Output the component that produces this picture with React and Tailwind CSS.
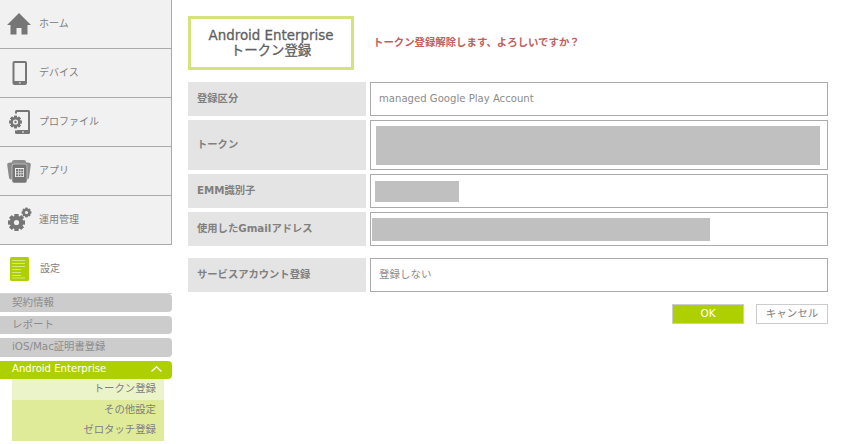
import React from 'react';

const font = "font-['DejaVu_Sans','Noto_Sans_CJK_JP',sans-serif]";

function HomeIcon() {
  return (
    <svg width="24" height="24" viewBox="0 0 24 24" fill="#767676">
      <path d="M12 1 L24 13 L20.5 13 L20.5 22.5 L14.5 22.5 L14.5 16 L9.5 16 L9.5 22.5 L3.5 22.5 L3.5 13 L0 13 Z" />
    </svg>
  );
}

function DeviceIcon() {
  return (
    <svg width="16" height="26" viewBox="0 0 16 26">
      <rect x="0.5" y="1" width="14.5" height="24" rx="2" fill="#767676" />
      <rect x="2.5" y="3" width="10.5" height="18" fill="#f1f1f1" />
      <rect x="6.8" y="22.4" width="2" height="1" fill="#f1f1f1" />
    </svg>
  );
}

function GearPath({ cx, cy, r, hole }) {
  const teeth = [0, 45, 90, 135, 180, 225, 270, 315];
  return (
    <g>
      {teeth.map((a) => (
        <rect key={a} x={cx - r * 0.28} y={cy - r * 1.25} width={r * 0.56} height={r * 2.5} fill="#767676" transform={`rotate(${a} ${cx} ${cy})`} />
      ))}
      <circle cx={cx} cy={cy} r={r} fill="#767676" />
      <circle cx={cx} cy={cy} r={hole} fill="#f1f1f1" />
    </g>
  );
}

function ProfileIcon() {
  return (
    <svg width="24" height="26" viewBox="0 0 24 26">
      <rect x="7" y="1" width="15" height="24" rx="1.5" fill="#767676" />
      <rect x="9" y="3" width="11" height="18" fill="#f1f1f1" />
      <rect x="14" y="22.5" width="2" height="1" fill="#f1f1f1" />
      <circle cx="8" cy="13" r="8.5" fill="#f1f1f1" />
      <GearPath cx={7.5} cy={13} r={5} hole={2.6} />
      <circle cx="7.5" cy="13" r="1.2" fill="#767676" />
    </svg>
  );
}

function AppIcon() {
  return (
    <svg width="24" height="24" viewBox="0 0 24 24">
      <rect x="1" y="3" width="13" height="17" rx="2" fill="#8a8a8a" transform="rotate(-8 7 11)" />
      <rect x="5" y="1" width="14" height="10" rx="2" fill="#8f8f8f" />
      <rect x="10" y="3" width="13" height="17" rx="2" fill="#8a8a8a" transform="rotate(8 17 11)" />
      <rect x="5" y="5" width="15" height="19" rx="2" fill="#767676" stroke="#f1f1f1" strokeWidth="0.5" />
      <rect x="8" y="9" width="9" height="9" fill="#f1f1f1" />
      <path d="M9 10h2v2H9zM11.6 10h2v2h-2zM14.2 10h2v2h-2zM9 12.6h2v2H9zM11.6 12.6h2v2h-2zM14.2 12.6h2v2h-2zM9 15.2h2v2H9zM11.6 15.2h2v2h-2zM14.2 15.2h2v2h-2z" fill="#767676" />
    </svg>
  );
}

function OpsIcon() {
  return (
    <svg width="24" height="26" viewBox="0 0 24 26">
      <GearPath cx={8.5} cy={15.5} r={6.8} hole={2.6} />
      <GearPath cx={18.5} cy={5.5} r={3.8} hole={1.6} />
    </svg>
  );
}

function SettingIcon() {
  return (
    <svg width="19" height="24" viewBox="0 0 19 24">
      <rect x="0" y="0" width="19" height="24" rx="1.5" fill="#afd000" />
      <path d="M2 3.5h13M2 6.5h13M2 9.5h13M2 12.5h9M2 15.5h9M2 18.5h9M2 21h13" stroke="#d7e67f" strokeWidth="1" />
    </svg>
  );
}

const mainMenu = [
  { label: 'ホーム', icon: <HomeIcon />, w: 'w-[24px]' },
  { label: 'デバイス', icon: <DeviceIcon />, w: 'w-[16px] ml-[5px]' },
  { label: 'プロファイル', icon: <ProfileIcon />, w: 'w-[24px] ml-[1px]' },
  { label: 'アプリ', icon: <AppIcon />, w: 'w-[24px]' },
  { label: '運用管理', icon: <OpsIcon />, w: 'w-[24px] ml-[1px]' },
];

function Row({ label, children, className = 'h-[34px]', boxClass = '' }) {
  return (
    <div className={`flex gap-[4px] ${className}`}>
      <div className="w-[178px] shrink-0 bg-[#e4e4e4] pl-[9px] flex items-center text-[10.3px] font-bold text-[#808080]">
        {label}
      </div>
      <div className={`flex-1 border border-[#aaaaaa] flex items-center bg-white ${boxClass}`}>{children}</div>
    </div>
  );
}

export default function App() {
  return (
    <div className={`w-[842px] h-[444px] bg-white flex overflow-hidden ${font}`}>
      {/* Sidebar */}
      <div className="w-[172px] shrink-0">
        <div className="border-r border-[#aaaaaa] bg-[#f1f1f1]">
          {mainMenu.map((m) => (
            <div key={m.label} className="h-[49px] border-b border-[#aaaaaa] flex items-center pl-[7px]">
              <div className="w-[24px] flex items-center">
                <div className={`${m.w} shrink-0`}>{m.icon}</div>
              </div>
              <span className="ml-[8px] mb-[2px] text-[10px] text-[#808080]">{m.label}</span>
            </div>
          ))}
        </div>
        <div className="h-[49px] border-b border-[#d4d4d4] flex items-center pl-[10px]">
          <SettingIcon />
          <span className="ml-[11px] mb-[2px] text-[10px] text-[#808080]">設定</span>
        </div>
        <div className="flex flex-col gap-[4px]">
          <div className="h-[18px] bg-[#cccccc] rounded-r-[4px] pl-[12px] flex items-center text-[10.5px] text-[#8c8c8c]">契約情報</div>
          <div className="h-[18px] bg-[#cccccc] rounded-r-[4px] pl-[12px] flex items-center text-[10.5px] text-[#8c8c8c]">レポート</div>
          <div className="h-[19px] bg-[#cccccc] rounded-r-[4px] pl-[12px] pb-[2px] flex items-center text-[10.3px] text-[#8c8c8c]">iOS/Mac証明書登録</div>
          <div>
            <div className="h-[18px] bg-[#afd000] rounded-r-[4px] pl-[12px] pr-[10px] pb-[2px] flex items-center justify-between text-[10.1px] text-white">
              <span>Android Enterprise</span>
              <svg width="11" height="6" viewBox="0 0 11 6" fill="none" stroke="#ffffff" strokeWidth="1.3">
                <path d="M0.5 5.5 L5.5 0.8 L10.5 5.5" />
              </svg>
            </div>
            <div className="ml-[12px] w-[152px] text-[10.4px] text-[#808080] text-right">
              <div className="h-[21px] bg-[#ebf3c8] pr-[8px] pb-[2px] flex items-center justify-end">トークン登録</div>
              <div className="h-[21px] bg-[#dfeb99] pr-[8px] pb-[2px] flex items-center justify-end">その他設定</div>
              <div className="h-[20px] bg-[#dfeb99] pr-[8px] pb-[2px] flex items-center justify-end">ゼロタッチ登録</div>
            </div>
          </div>
        </div>
      </div>

      {/* Main */}
      <div className="ml-[16px] w-[640px] pt-[16px]">
        <div className="flex items-center h-[54px]">
          <div className="w-[166px] h-[54px] border-[3px] border-[#d4e37a] flex flex-col items-center justify-center text-[13.4px] leading-[15px] text-[#5f5f5f] [-webkit-text-stroke:0.3px_#5f5f5f]">
            <span>Android Enterprise</span>
            <span>トークン登録</span>
          </div>
          <span className="ml-[19px] mb-[1px] text-[10.4px] font-bold text-[#c0605f]">トークン登録解除します、よろしいですか？</span>
        </div>

        <div className="mt-[12px] flex flex-col gap-[4px]">
          <Row label="登録区分">
            <span className="pl-[8px] text-[10.1px] text-[#8c8c8c]">managed Google Play Account</span>
          </Row>
          <Row label="トークン" className="h-[50px]" boxClass="pl-[5px]">
            <div className="w-[444px] h-[39px] mt-[1px] bg-[#c0c0c0]" />
          </Row>
          <Row label="EMM識別子" boxClass="pl-[4px]">
            <div className="w-[84px] h-[21px] bg-[#c0c0c0]" />
          </Row>
          <Row label="使用したGmailアドレス" boxClass="pl-[1px]">
            <div className="w-[338px] h-[23px] bg-[#c0c0c0]" />
          </Row>
          <Row label="サービスアカウント登録" className="h-[34px] mt-[8px]">
            <span className="pl-[8px] text-[10.5px] text-[#8c8c8c]">登録しない</span>
          </Row>
        </div>

        <div className="mt-[12px] flex justify-end gap-[12px]">
          <button className="w-[72px] h-[20px] bg-[#afd000] border border-[#cccccc] text-[10.5px] text-white flex items-center justify-center">
            OK
          </button>
          <button className="w-[72px] h-[20px] bg-white border border-[#cccccc] text-[10.5px] text-[#808080] flex items-center justify-center">
            キャンセル
          </button>
        </div>
      </div>
    </div>
  );
}
